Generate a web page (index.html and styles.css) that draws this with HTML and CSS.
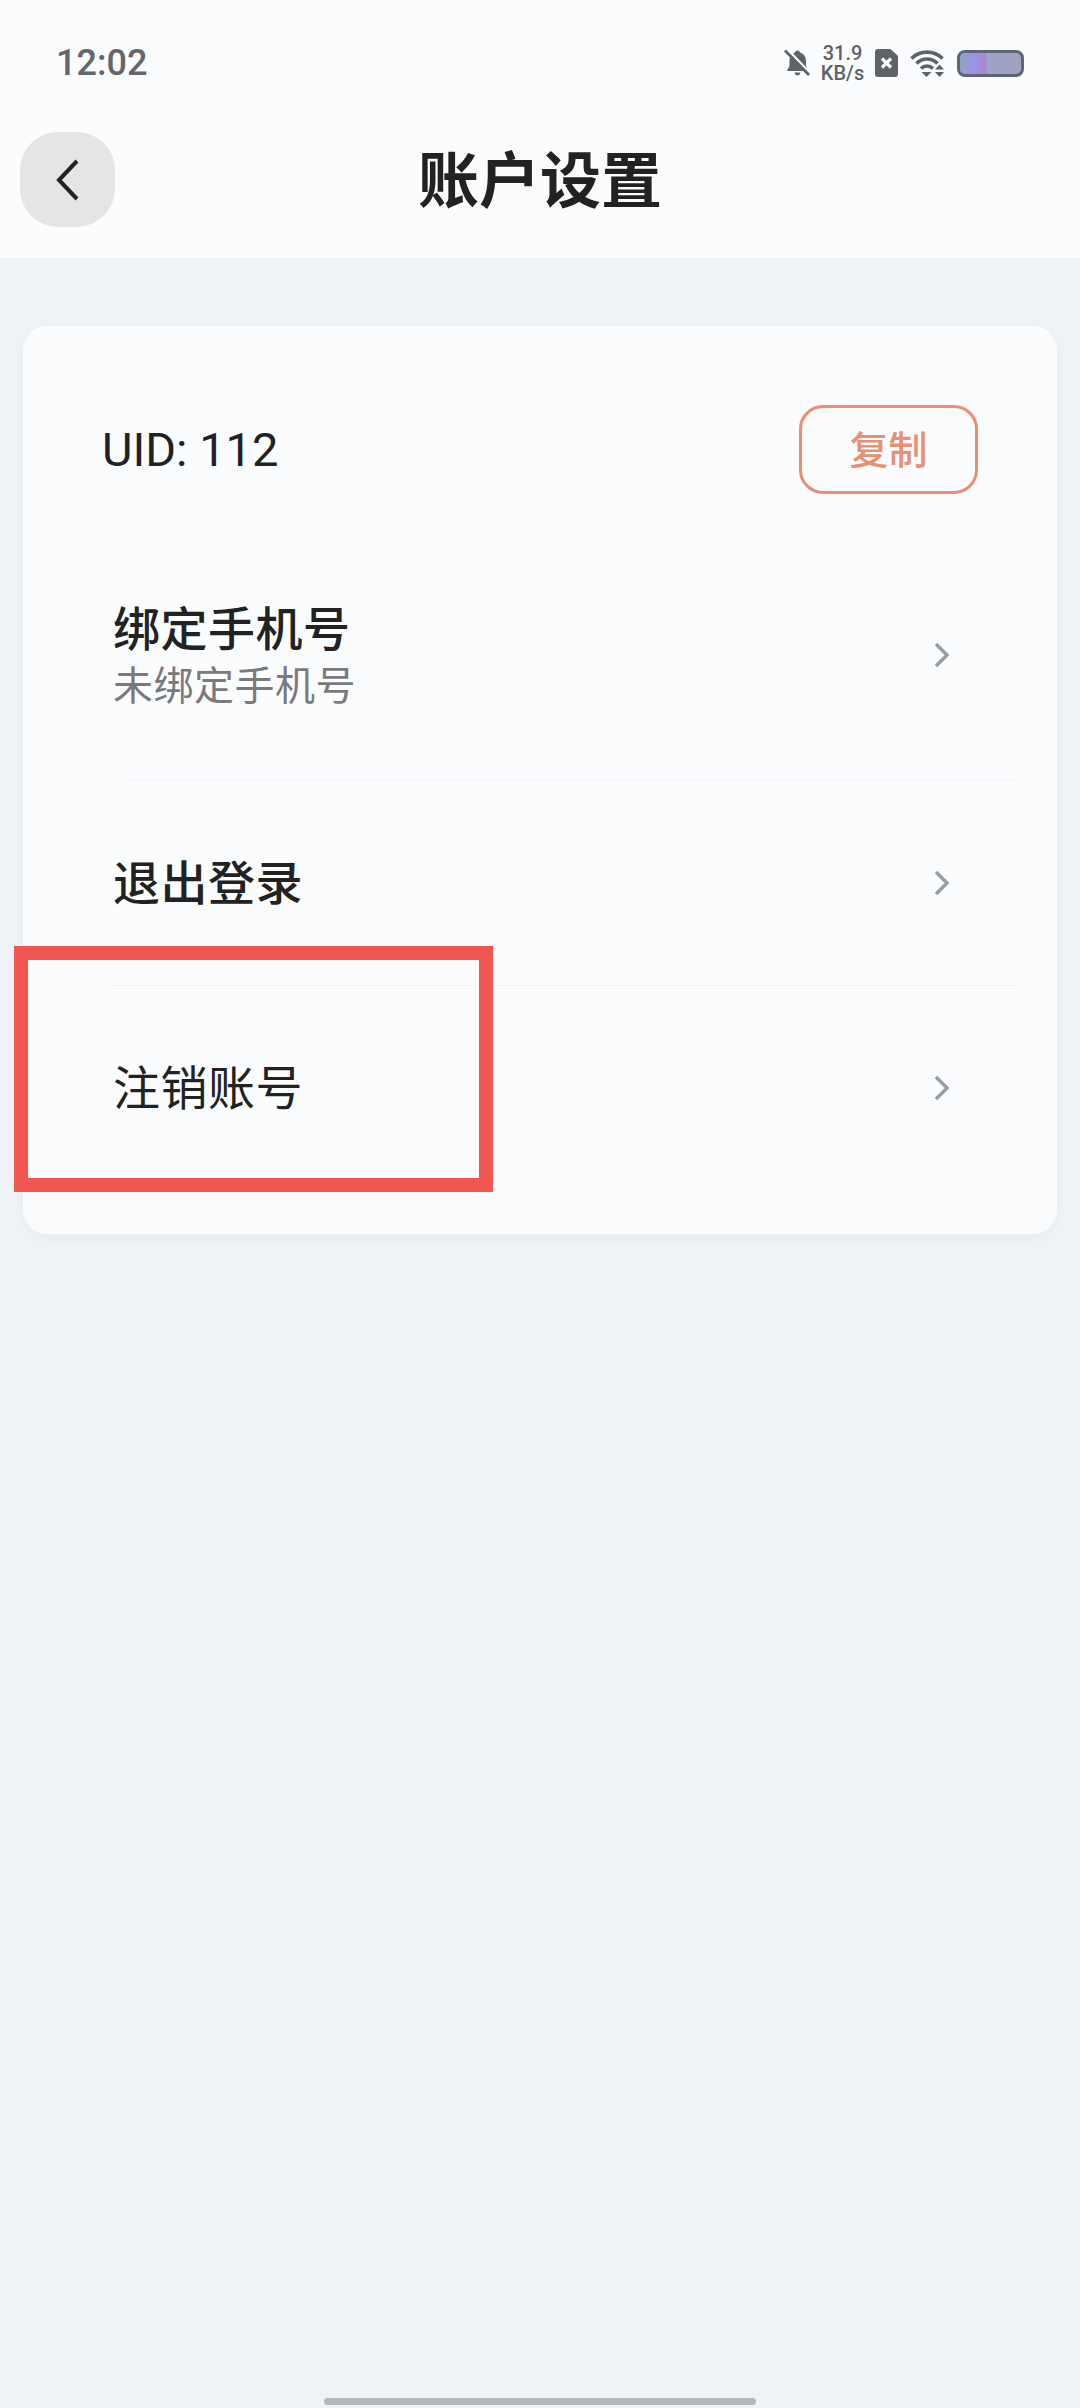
FILE: index.html
```html
<!DOCTYPE html>
<html lang="zh-CN">
<head>
  <meta charset="UTF-8">
  <meta name="viewport" content="width=device-width, initial-scale=1.0">
  <title>账户设置</title>
  <link rel="stylesheet" href="styles.css">
</head>
<body>

<div class="page">
  <header class="header">
    <div class="status-bar">
      <span class="time">12:02</span>
      <div class="status-icons">
        <!-- muted bell -->
        <svg class="icon-bell" viewBox="0 0 26 28">
          <path d="M13.500 1.500c1.300 0 2.200.8 2.500 2 3.700 1 6 4.300 6 8.500v5l2.500 5H3l2.500-5v-5c0-4.200 2.300-7.500 5.500-8.500.3-1.200 1.200-2 2.500-2z" fill="#5f6368"/>
          <path d="M10.500 23.500h6c-.3 2-1.500 3-3 3s-2.700-1-3-3z" fill="#5f6368"/>
          <path d="M3 0 26 24" stroke="#fbfcfe" stroke-width="2.500"/>
          <path d="M1 1.500 25 26" stroke="#5f6368" stroke-width="2.800"/>
        </svg>
        <div class="speed">
          <span>31.9</span>
          <span>KB/s</span>
        </div>
        <!-- sim card, no service -->
        <svg class="icon-sim" viewBox="0 0 23 28">
          <path d="M3 0h12.500L23 7v18a3 3 0 0 1-3 3H3a3 3 0 0 1-3-3V3a3 3 0 0 1 3-3z" fill="#5f6368"/>
          <path d="M7 9.500 16 18.500M16 9.500 7 18.500" stroke="#fbfcfe" stroke-width="3.200"/>
        </svg>
        <svg class="icon-wifi" viewBox="0 0 35 28" fill="none">
          <path d="M1.500 9.500C10 1 24 1 32.500 9.500" stroke="#5f6368" stroke-width="3.600"/>
          <path d="M6.500 14.500C12.500 8.500 21.500 8.500 27.500 14.500" stroke="#5f6368" stroke-width="3.600"/>
          <path d="M11 19.500c3.500-3.400 8.500-3.400 12 0" stroke="#5f6368" stroke-width="3.600"/>
          <path d="M11.500 23h10L16.500 28z" fill="#5f6368"/>
          <path d="M29.500 15.500l4.500 5h-9zM29.500 28l-4.500-5h9z" fill="#5f6368"/>
        </svg>
        <div class="battery"><span class="battery-band"></span></div>
      </div>
    </div>
    <div class="nav-bar">
      <button class="back-btn">
        <svg viewBox="0 0 24 42" fill="none">
          <path d="M21 2 3 21l18 19" stroke="#222" stroke-width="4"/>
        </svg>
      </button>
      <h1 class="nav-title">账户设置</h1>
    </div>
  </header>

  <main class="content">
    <section class="card">
      <div class="uid-row">
        <span class="uid">UID: 112</span>
        <button class="copy-btn">复制</button>
      </div>

      <div class="row row-phone">
        <div class="row-text">
          <div class="row-title">绑定手机号</div>
          <div class="row-sub">未绑定手机号</div>
        </div>
        <svg class="chevron" viewBox="0 0 16 26" fill="none"><path d="M2 2l11 11L2 24" stroke="#999ea3" stroke-width="3.500"/></svg>
      </div>
      <div class="divider divider-first"></div>

      <div class="row">
        <div class="row-title">退出登录</div>
        <svg class="chevron" viewBox="0 0 16 26" fill="none"><path d="M2 2l11 11L2 24" stroke="#999ea3" stroke-width="3.500"/></svg>
      </div>
      <div class="divider"></div>

      <div class="row">
        <div class="row-title row-title-regular">注销账号</div>
        <svg class="chevron" viewBox="0 0 16 26" fill="none"><path d="M2 2l11 11L2 24" stroke="#999ea3" stroke-width="3.500"/></svg>
      </div>
    </section>
  </main>

  <div class="highlight"></div>
  <div class="home-bar"></div>
</div>

</body>
</html>
```

FILE: styles.css
```css
* {
  box-sizing: border-box;
}

body {
  margin: 0;
  background-color: #eff2f7;
  font-family: "Noto Sans CJK SC", "Noto Sans", sans-serif;
  color: #222;
}

.page {
  position: relative;
  display: flex;
  flex-direction: column;
  height: 2408px;
  overflow: hidden;
}

.header {
  height: 258px;
  background-color: #fbfcfe;
}

.status-bar {
  display: flex;
  align-items: center;
  justify-content: space-between;
  height: 126px;
  padding: 0 56px 0 56px;
}

.time {
  font-family: Roboto, sans-serif;
  font-size: 36px;
  font-weight: 500;
  color: #63666a;
}

.status-icons {
  display: flex;
  align-items: center;
  gap: 12px;
}

.icon-bell {
  width: 26px;
  height: 28px;
}

.speed {
  display: flex;
  flex-direction: column;
  align-items: center;
  width: 41px;
  font-family: Roboto, sans-serif;
  font-size: 20px;
  font-weight: 500;
  line-height: 20px;
  color: #5f6368;
}

.icon-sim {
  width: 23px;
  height: 28px;
}

.icon-wifi {
  width: 35px;
  height: 28px;
}

.battery {
  position: relative;
  width: 67px;
  height: 27px;
  background-color: #9ea3c2;
  border: 3px solid #5f6579;
  border-radius: 8px;
  overflow: hidden;
}

.battery-band {
  position: absolute;
  left: 0;
  top: 0;
  bottom: 0;
  width: 27px;
  background: linear-gradient(90deg, #939dcf 30%, #9c92ea 50%, #a08ce0 70%, #b184c8 95%, #9ea3c2);
}

.nav-bar {
  display: grid;
  grid-template-columns: 95px 1fr 95px;
  align-items: center;
  height: 132px;
  padding: 6px 20px 31px;
}

.back-btn {
  display: flex;
  align-items: center;
  justify-content: center;
  width: 95px;
  height: 95px;
  padding: 0;
  background-color: #e5e5e6;
  border: none;
  border-radius: 38px;
}

.back-btn svg {
  width: 24px;
  height: 42px;
}

.nav-title {
  margin: 0;
  padding-bottom: 6px;
  font-size: 61px;
  font-weight: 700;
  line-height: 70px;
  text-align: center;
  color: #222;
}

.content {
  padding: 68px 23px 0;
}

.card {
  padding: 79px 0 44px;
  background-color: #fbfcfe;
  border-radius: 24px;
  box-shadow: 0 4px 12px rgba(90, 100, 120, 0.05);
}

.uid-row {
  display: flex;
  align-items: center;
  justify-content: space-between;
  padding: 0 79px 0 79px;
}

.uid {
  font-family: Roboto, sans-serif;
  font-size: 47px;
  color: #222;
}

.copy-btn {
  width: 179px;
  height: 89px;
  padding: 0 0 5px;
  font-family: inherit;
  font-size: 39px;
  font-weight: 500;
  color: #e98f72;
  background: none;
  border: 3px solid #e98f72;
  border-radius: 24px;
}

.row {
  display: flex;
  align-items: center;
  justify-content: space-between;
  height: 204px;
  padding: 0 107px 0 90px;
}

.row-phone {
  height: 286px;
  padding-top: 36px;
}

.row-text {
  margin-bottom: 3px;
}

.row-title {
  padding-bottom: 6px;
  font-size: 47px;
  font-weight: 500;
  line-height: 58px;
  letter-spacing: 0.5px;
}

.row-title-regular {
  font-weight: 400;
}

.row-text .row-title {
  padding-bottom: 0;
}

.row-sub {
  font-size: 40px;
  line-height: 56px;
  letter-spacing: 0.5px;
  color: #7a7a7c;
}

.chevron {
  width: 16px;
  height: 26px;
}

.divider {
  height: 1px;
  margin: 0 37px 0 87px;
  background-color: #f1f3f6;
}

.divider-first {
  margin-left: 102px;
}

/* annotation frame drawn over the delete-account row */
.highlight {
  position: absolute;
  left: 14px;
  top: 946px;
  width: 479px;
  height: 246px;
  border: 14px solid #f15750;
}

.home-bar {
  position: absolute;
  left: 324px;
  bottom: 3px;
  width: 432px;
  height: 7px;
  background-color: #b3b6bb;
  border-radius: 4px;
}
```
